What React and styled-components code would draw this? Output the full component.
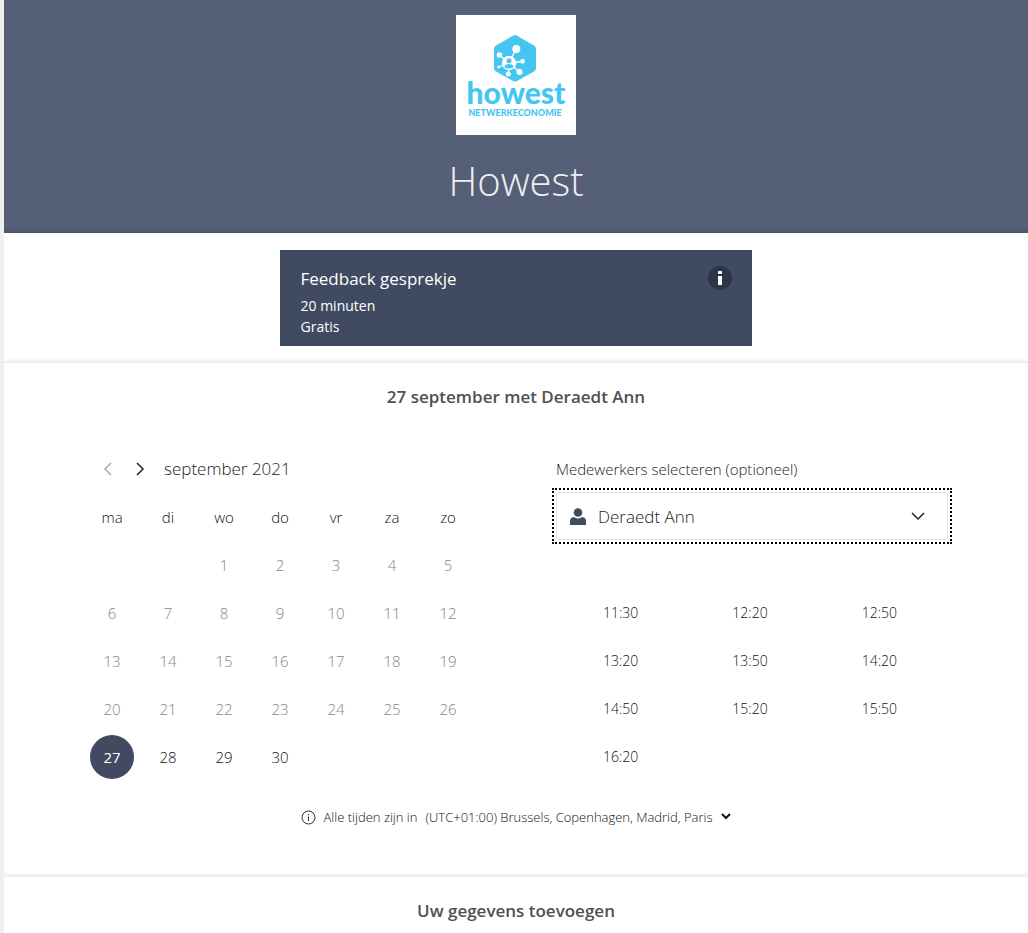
import React, { useState } from "react";
import styled, { createGlobalStyle } from "styled-components";

const GlobalStyle = createGlobalStyle`
  *, *::before, *::after { box-sizing: border-box; }
  body {
    margin: 0;
    background: #fff;
    color: #222;
    font-family: "Open Sans", "Noto Sans", sans-serif;
    font-size: 14px;
    font-weight: 300;
  }
  button, select { font: inherit; color: inherit; }
  h1, h2, h3, p { margin: 0; font-weight: inherit; }
`;

const Page = styled.div`
  border-left: 4px solid #efefef;
  min-height: 100vh;
  overflow: hidden;
`;

const Header = styled.header`
  display: flex;
  flex-direction: column;
  align-items: center;
  gap: 16px;
  padding: 15px 0 22px;
  background: #556077;
  box-shadow: inset 0 -4px 4px -2px #4a5469;
`;

const Logo = styled.svg`
  display: block;
  width: 120px;
  height: 120px;
  background: #fff;
`;

const BusinessName = styled.h1`
  color: #eeeff2;
  font-size: 40px;
  line-height: 60px;
`;

const Section = styled.section`
  display: flex;
  flex-direction: column;
  align-items: center;
  box-shadow: inset 0 -4px 4px -2px #e6e6e6;
  padding: ${(p) => p.$padding};
`;

const ServiceCard = styled.article`
  display: flex;
  justify-content: space-between;
  align-items: flex-start;
  width: 46%;
  min-width: 300px;
  padding: 16px 20px 9px;
  background: #404b61;
  color: #fff;
  font-weight: 400;
`;

const ServiceName = styled.h3`
  font-size: 17px;
  line-height: 26px;
  margin-bottom: 3px;
`;

const ServiceDetail = styled.p`
  font-size: 14px;
  line-height: 21px;
`;

const InfoButton = styled.button`
  display: grid;
  place-items: center;
  width: 24px;
  height: 24px;
  padding: 0;
  border: 0;
  border-radius: 50%;
  background: #2d3646;
  cursor: pointer;
`;

const SectionTitle = styled.h2`
  color: #505050;
  font-size: 17px;
  font-weight: 600;
  line-height: 24px;
  text-align: center;
`;

const Columns = styled.div`
  display: flex;
  flex-wrap: wrap;
  justify-content: space-between;
  gap: 32px;
  width: 100%;
  max-width: 864px;
  margin-top: 36px;
`;

const Column = styled.div`
  width: 392px;
  max-width: 100%;
`;

const MonthBar = styled.div`
  display: flex;
  align-items: center;
  height: 48px;
  padding-left: 8px;
`;

const ArrowButton = styled.button`
  display: grid;
  place-items: center;
  width: 32px;
  height: 32px;
  padding: 0;
  border: 0;
  background: none;
  color: #222;
  cursor: pointer;
  &:disabled { color: #a6a6a6; cursor: default; }
`;

const MonthName = styled.h3`
  margin-left: 8px;
  font-size: 17px;
  line-height: 24px;
`;

const Calendar = styled.table`
  width: 100%;
  table-layout: fixed;
  border-collapse: collapse;
`;

const Weekday = styled.th`
  height: 48px;
  padding: 0;
  color: #111;
  font-size: 15px;
  font-weight: 300;
`;

const DayCell = styled.td`
  height: 48px;
  padding: 0;
  text-align: center;
`;

const DayButton = styled.button`
  width: 44px;
  height: 44px;
  padding: 0;
  border: 0;
  border-radius: 50%;
  background: ${(p) => (p.$selected ? "#404b61" : "none")};
  color: ${(p) => (p.$selected ? "#fff" : "#111")};
  font-size: 15px;
  font-weight: ${(p) => (p.$selected ? 400 : 300)};
  cursor: pointer;
  &:disabled { color: #858585; cursor: default; }
`;

const StaffLabel = styled.label`
  display: flex;
  align-items: center;
  height: 47px;
  font-size: 15px;
`;

const StaffField = styled.div`
  display: grid;
  align-items: center;
  height: 48px;
  color: #404b61;
  > * { grid-area: 1 / 1; }
  > svg { pointer-events: none; z-index: 1; }
  > svg:first-child { margin-left: 14px; }
  > svg:last-child { justify-self: end; margin-right: 22px; color: #222; }
`;

const StaffSelect = styled.select`
  width: 100%;
  height: 48px;
  padding: 0 48px 0 41px;
  appearance: none;
  border: 1px solid #e6e6e6;
  border-radius: 0;
  outline: 2px dotted #000;
  outline-offset: 2px;
  background: #fff;
  color: #222;
  font-size: 17px;
`;

const TimeGrid = styled.div`
  display: grid;
  grid-template-columns: repeat(3, 1fr);
  margin-top: 48px;
  padding-right: 4px;
`;

const TimeButton = styled.button`
  height: 48px;
  padding: 0;
  border: 0;
  background: none;
  color: #111;
  cursor: pointer;
`;

const ZoneRow = styled.div`
  display: flex;
  align-items: center;
  height: 24px;
  margin-top: 24px;
  color: #111;
  font-size: 13px;
  > label { margin: 0 8px; }
`;

const ZoneSelect = styled.select`
  appearance: none;
  border: 0;
  padding: 0;
  margin-right: 8px;
  background: none;
`;

const DETAILS = ["20 minuten", "Gratis"];
const WEEKDAYS = ["ma", "di", "wo", "do", "vr", "za", "zo"];
const TIMES = ["11:30", "12:20", "12:50", "13:20", "13:50", "14:20", "14:50", "15:20", "15:50", "16:20"];
const WEEKS = [0, 1, 2, 3, 4].map((w) =>
  WEEKDAYS.map((_, d) => {
    const day = w * 7 + d - 1;
    return day >= 1 && day <= 30 ? day : null;
  })
);

function Chevron({ points, width, height, stroke }) {
  return (
    <svg width={width} height={height} fill="none" stroke="currentColor" strokeWidth={stroke} aria-hidden="true">
      <polyline points={points} />
    </svg>
  );
}

function HowestLogo() {
  return (
    <Logo viewBox="0 0 120 120" role="img" aria-label="Howest Netwerkeconomie">
      <path
        d="M57 20.7 Q59 19.5 61 20.7 L78 30.4 Q80 31.6 80 34 V53 Q80 55.3 78 56.5 L61 66 Q59 67 57 66 L40 56.5 Q38 55.3 38 53 V34 Q38 31.6 40 30.4 Z"
        fill="#45c6f2"
      />
      <g stroke="#fff" strokeWidth="1.3">
        <path d="M53 48 L60 34 M53 48 L43.5 40 M53 48 L66.5 46.5 M53 48 L63.500 57 M53 48 L52.5 59 M53 48 L42.7 52" />
      </g>
      <g fill="#fff">
        <circle cx="60.3" cy="34" r="4" />
        <circle cx="43.5" cy="40" r="2.8" />
        <circle cx="66.6" cy="46.3" r="2.4" />
        <circle cx="63.5" cy="57" r="3" />
        <circle cx="52.3" cy="59" r="2.5" />
        <circle cx="42.7" cy="52" r="1.5" />
        <circle cx="53" cy="48" r="7.2" />
      </g>
      <g fill="#45c6f2">
        <circle cx="53" cy="45.8" r="2.5" />
        <path d="M48.3 52 Q49 49 53 49 Q57 49 57.7 52 Q53 55 48.3 52" />
      </g>
      <g fill="#45c6f2" fontFamily="Lato, sans-serif" textAnchor="middle">
        <text x="60" y="89" fontSize="30" fontWeight="900">howest</text>
        <text x="59" y="101" fontSize="9" fontWeight="900">NETWERKECONOMIE</text>
      </g>
    </Logo>
  );
}

export default function App() {
  const [selected, setSelected] = useState(27);
  return (
    <>
      <GlobalStyle />
      <Page>
        <Header>
          <HowestLogo />
          <BusinessName>Howest</BusinessName>
        </Header>
        <main>
          <Section $padding="17px 0">
            <ServiceCard>
              <div>
                <ServiceName>Feedback gesprekje</ServiceName>
                {DETAILS.map((d) => (
                  <ServiceDetail key={d}>{d}</ServiceDetail>
                ))}
              </div>
              <InfoButton aria-label="Informatie">
                <svg width="6" height="14" fill="#fff" aria-hidden="true">
                  <rect x="1" width="4" height="3" rx="1" />
                  <rect x="1" y="5" width="4" height="9" />
                </svg>
              </InfoButton>
            </ServiceCard>
          </Section>
          <Section $padding="22px 16px 48px">
            <SectionTitle>{selected} september met Deraedt Ann</SectionTitle>
            <Columns>
              <Column>
                <MonthBar>
                  <ArrowButton disabled aria-label="Vorige maand">
                    <Chevron width={10} height={14} points="8,1 2,7 8,13" stroke={1.5} />
                  </ArrowButton>
                  <ArrowButton aria-label="Volgende maand">
                    <Chevron width={10} height={14} points="2,1 8,7 2,13" stroke={1.5} />
                  </ArrowButton>
                  <MonthName>september 2021</MonthName>
                </MonthBar>
                <Calendar>
                  <thead>
                    <tr>
                      {WEEKDAYS.map((d) => (
                        <Weekday key={d} scope="col">{d}</Weekday>
                      ))}
                    </tr>
                  </thead>
                  <tbody>
                    {WEEKS.map((week, i) => (
                      <tr key={i}>
                        {week.map((day, j) => (
                          <DayCell key={j}>
                            {day && (
                              <DayButton $selected={day === selected} disabled={day < 27} onClick={() => setSelected(day)}>
                                {day}
                              </DayButton>
                            )}
                          </DayCell>
                        ))}
                      </tr>
                    ))}
                  </tbody>
                </Calendar>
              </Column>
              <Column>
                <StaffLabel htmlFor="staff">Medewerkers selecteren (optioneel)</StaffLabel>
                <StaffField>
                  <svg width="16" height="17" fill="currentColor" aria-hidden="true">
                    <circle cx="8" cy="4.5" r="4.3" />
                    <path d="M0 17 V13 Q0 9.5 4 9 Q8 12 12 9 Q16 9.5 16 13 V17 Z" />
                  </svg>
                  <StaffSelect id="staff">
                    <option>Deraedt Ann</option>
                  </StaffSelect>
                  <Chevron width={16} height={9} points="2,1 8,7 14,1" stroke={1.5} />
                </StaffField>
                <TimeGrid>
                  {TIMES.map((t) => (
                    <TimeButton key={t}>{t}</TimeButton>
                  ))}
                </TimeGrid>
              </Column>
            </Columns>
            <ZoneRow>
              <svg width="15" height="15" fill="none" stroke="#333" aria-hidden="true">
                <circle cx="7.5" cy="7.5" r="6.5" />
                <path d="M7.5 4 V5.2 M7.5 6.5 V11" />
              </svg>
              <label htmlFor="zone">Alle tijden zijn in</label>
              <ZoneSelect id="zone">
                <option>(UTC+01:00) Brussels, Copenhagen, Madrid, Paris</option>
              </ZoneSelect>
              <Chevron width={10} height={8} points="1,1 5,5 9,1" stroke={2} />
            </ZoneRow>
          </Section>
          <Section $padding="22px 16px">
            <SectionTitle>Uw gegevens toevoegen</SectionTitle>
          </Section>
        </main>
      </Page>
    </>
  );
}
